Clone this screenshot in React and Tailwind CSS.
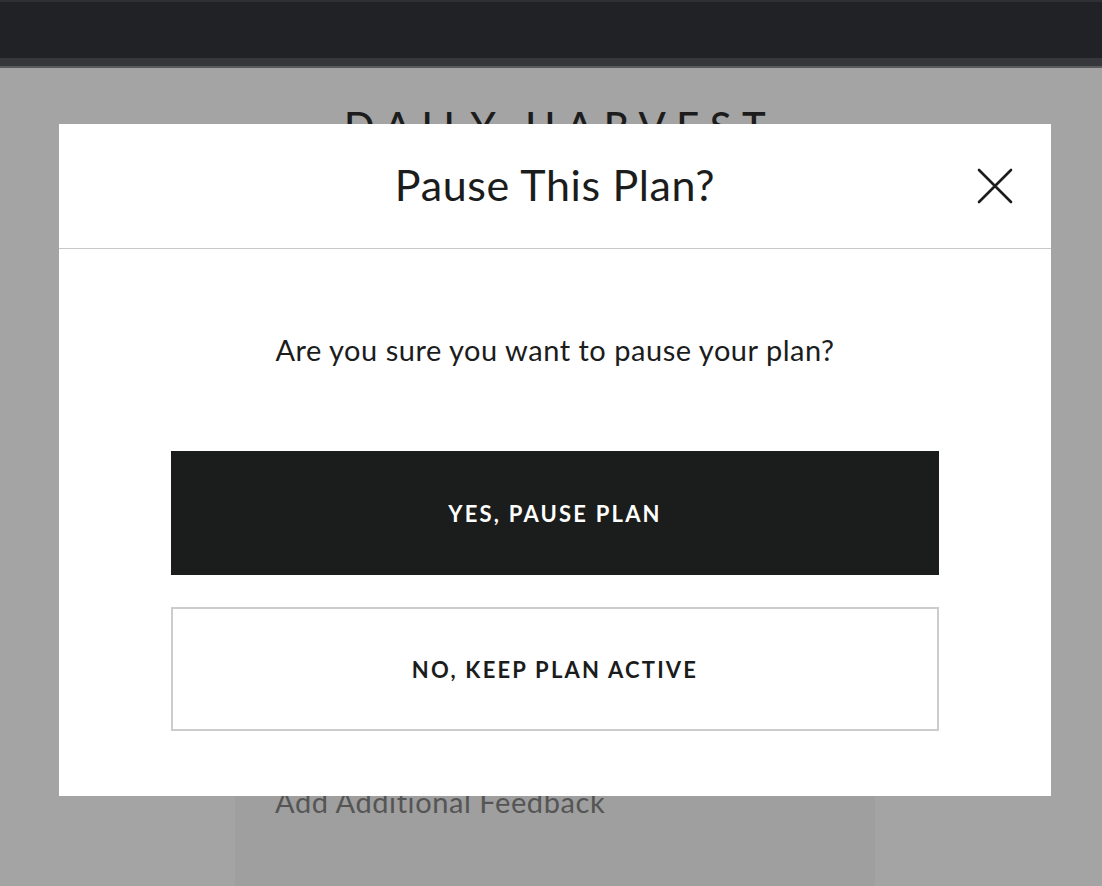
import { useState } from "react";

const font = { fontFamily: "Lato, 'Open Sans', sans-serif" };

const PauseModal = ({ onClose }) => {
    return (
        <div className="absolute inset-0 z-10">
            <div className="absolute left-[59px] top-[124px] w-[992px] h-[672px] bg-white">
                <div className="relative h-[125px] border-b border-[#c8c8c8] flex items-center justify-center">
                    <h2 className="text-[43px] leading-none tracking-[0.015em] text-[#1b1c1c] pb-1">Pause This Plan?</h2>
                    <button
                        onClick={onClose}
                        className="absolute right-[38px] top-[44px] w-[36px] h-[36px] flex items-center justify-center"
                        aria-label="Close"
                    >
                        <svg width="36" height="36" viewBox="0 0 36 36">
                            <path d="M2 2 L34 34 M34 2 L2 34" stroke="#1b1c1c" strokeWidth="2.6" strokeLinecap="round" />
                        </svg>
                    </button>
                </div>
                <div className="flex flex-col items-center pt-[84px]">
                    <p className="text-[29px] leading-[34px] tracking-[0.018em] text-[#1b1c1c]">Are you sure you want to pause your plan?</p>
                    <div className="mt-[84px] w-[768px] flex flex-col gap-8">
                        <button className="h-[124px] w-full bg-[#1b1c1c] text-white text-[22px] font-bold tracking-[0.1em]">
                            YES, PAUSE PLAN
                        </button>
                        <button className="h-[124px] w-full bg-white border-2 border-[#cccccc] text-[#1b1c1c] text-[22px] font-bold tracking-[0.1em]">
                            NO, KEEP PLAN ACTIVE
                        </button>
                    </div>
                </div>
            </div>
        </div>
    );
}

export default function App() {
    const [open, setOpen] = useState(true);

    return (
        <div className="relative w-[1102px] h-[886px] overflow-hidden bg-[#a4a4a4]" style={font}>
            <div className="h-[2px] bg-[#2f3034]" />
            <div className="h-[56px] bg-[#212226]" />
            <div className="h-[8px] bg-[#36373b]" />
            <div className="h-[2px] bg-[#5a5b5e]" />
            <div className="flex flex-col items-center pl-[8px]">
                <div className="mt-[38px] pl-[10px] text-[40px] leading-none font-medium tracking-[0.26em] text-[#1c1c1c]">
                    DAILY HARVEST
                </div>
                <div className="h-[592px]" />
                <div className="w-[640px] h-[300px] bg-[#9e9f9e] px-10 pt-[47px]">
                    <p className="text-[29px] leading-[34px] tracking-[0.02em] text-[#555555]">Add Additional Feedback</p>
                </div>
            </div>
            {open && <PauseModal onClose={() => setOpen(false)} />}
        </div>
    );
}
